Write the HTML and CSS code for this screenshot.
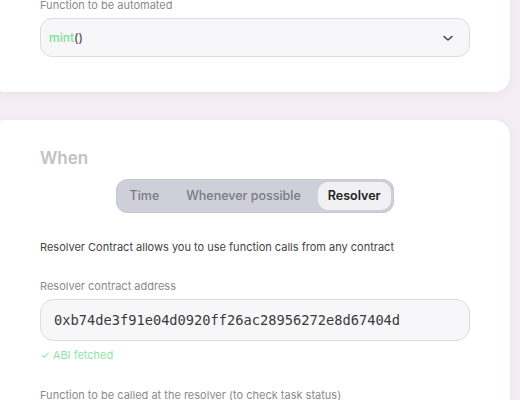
FILE: index.html
```html
<!DOCTYPE html>
<html>
<head>
<meta charset="utf-8">
<link rel="stylesheet" href="styles.css">
</head>
<body>
<div class="page">
  <section class="card card-top">
    <div class="label label-top">Function to be automated</div>
    <div class="select">
      <span class="fn"><span class="fn-name">mint</span>()</span>
      <svg class="chev" width="14" height="14" viewBox="0 0 14 14"><path d="M3 5.5l4 3.5 4-3.5" fill="none" stroke="#444" stroke-width="1.6" stroke-linecap="round" stroke-linejoin="round"/></svg>
    </div>
  </section>
  <section class="card card-when">
    <h2 class="title">When</h2>
    <div class="seg-wrap">
      <div class="seg">
        <span class="seg-item">Time</span>
        <span class="seg-item">Whenever possible</span>
        <span class="seg-item active">Resolver</span>
      </div>
    </div>
    <p class="desc">Resolver Contract allows you to use function calls from any contract</p>
    <div class="label">Resolver contract address</div>
    <div class="input">0xb74de3f91e04d0920ff26ac28956272e8d67404d</div>
    <div class="ok">✓ ABI fetched</div>
    <div class="label label-last">Function to be called at the resolver (to check task status)</div>
  </section>
</div>
</body>
</html>
```

FILE: styles.css
```css
* { box-sizing: border-box; }
html, body { margin: 0; padding: 0; }
body {
  background: #f4eef3;
  font-family: Inter, "Noto Sans", sans-serif;
  width: 520px;
  height: 400px;
  overflow: hidden;
}
.page {
  display: flex;
  flex-direction: column;
  gap: 28px;
  margin-left: -10px;
  width: 520px;
  margin-top: -14px;
}
.card {
  background: #fff;
  border-radius: 16px;
  padding: 0 40px 0 50px;
  box-shadow: 0 2px 10px rgba(120, 80, 110, 0.08);
}
.card-top {
  padding-top: 12px;
  padding-bottom: 35px;
}
.label {
  font-size: 11px;
  color: #8a8a8a;
  line-height: 14px;
  margin-bottom: 6px;
}
.label-top { margin-bottom: 6px; }
.select {
  height: 39px;
  border: 1px solid #dcdce2;
  background: #f7f7f9;
  border-radius: 12px;
  display: flex;
  align-items: center;
  justify-content: space-between;
  padding: 0 14px 0 8px;
}
.fn { font-size: 12px; font-weight: 500; color: #555; }
.fn-name { color: #7fdc9a; }
.chev { display: block; }
.card-when {
  padding-top: 28px;
  padding-bottom: 40px;
}
.title {
  margin: 0;
  font-size: 17px;
  font-weight: 600;
  color: #c2c2c2;
  line-height: 20px;
}
.seg-wrap {
  display: flex;
  justify-content: center;
  margin-top: 11px;
}
.seg {
  display: flex;
  align-items: center;
  background: #cfcfd9;
  border-radius: 12px;
  padding: 3px;
  gap: 7px;
  box-shadow: inset 0 0 0 1px #c8c8d2;
}
.seg-item {
  font-size: 12.5px;
  font-weight: 500;
  color: #7a7b88;
  padding: 0 10px;
  height: 28px;
  line-height: 28px;
  border-radius: 10px;
}
.seg-item.active {
  background: #f1f1f4;
  color: #222;
  font-weight: 600;
}
.desc {
  margin: 27px 0 0;
  font-size: 11px;
  color: #444;
  line-height: 14px;
}
.card-when .label { margin-top: 25px; }
.input {
  height: 42px;
  border: 1px solid #dcdce2;
  background: #f7f7f9;
  border-radius: 14px;
  display: flex;
  align-items: center;
  padding: 0 13px;
  font-family: "DejaVu Sans Mono", monospace;
  font-size: 13.7px;
  color: #3a3a3a;
}
.ok {
  font-size: 11px;
  color: #8fe3a8;
  margin-top: 7px;
  line-height: 14px;
}
.card-when .label-last { margin-top: 26px; }
```
